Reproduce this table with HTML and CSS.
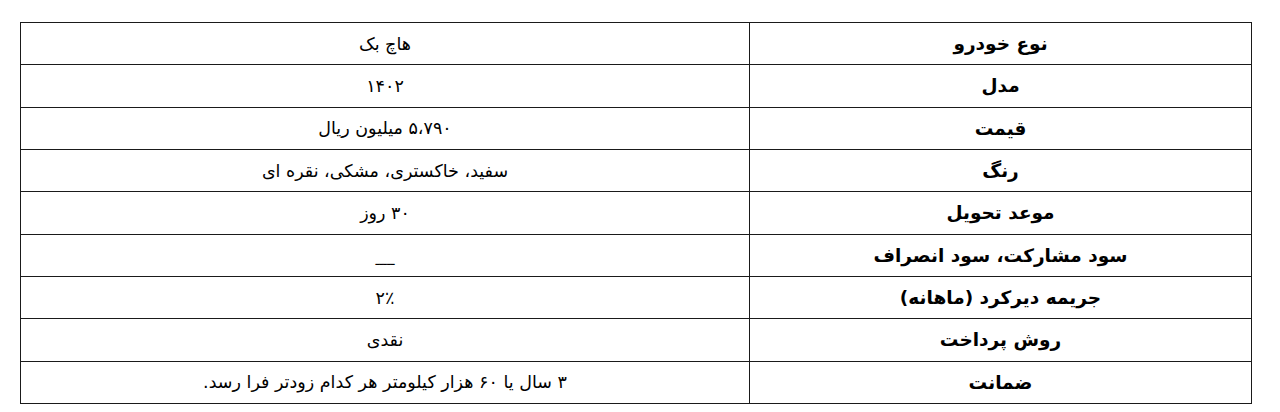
FILE: index.html
```html
<!DOCTYPE html>
<html lang="fa" dir="rtl">
<head>
<meta charset="utf-8">
<title>مشخصات خودرو</title>
<link rel="stylesheet" href="styles.css">
</head>
<body>
<table class="spec">
  <tbody>
    <tr><th>نوع خودرو</th><td>هاچ بک</td></tr>
    <tr><th>مدل</th><td>۱۴۰۲</td></tr>
    <tr><th>قیمت</th><td>۵،۷۹۰ میلیون ریال</td></tr>
    <tr><th>رنگ</th><td>سفید، خاکستری، مشکی، نقره ای</td></tr>
    <tr><th>موعد تحویل</th><td>۳۰ روز</td></tr>
    <tr><th>سود مشارکت، سود انصراف</th><td><span class="dash">ـــــ</span></td></tr>
    <tr><th>جریمه دیرکرد (ماهانه)</th><td>۲٪</td></tr>
    <tr><th>روش پرداخت</th><td>نقدی</td></tr>
    <tr><th>ضمانت</th><td>۳ سال یا ۶۰ هزار کیلومتر هر کدام زودتر فرا رسد.</td></tr>
  </tbody>
</table>
</body>
</html>
```
FILE: styles.css
```css
html, body {
  margin: 0;
  padding: 0;
  background: #ffffff;
}
body {
  padding: 22px 28px 0 20px;
  font-family: "DejaVu Sans", sans-serif;
  color: #000;
}
.spec {
  width: 1232px;
  border-collapse: collapse;
  table-layout: fixed;
  border: 1.5px solid #1a1a1a;
}
.spec th,
.spec td {
  border: 1.5px solid #1a1a1a;
  height: 41.33px;
  padding: 0;
  text-align: center;
  vertical-align: middle;
}
.spec th {
  width: 501px;
  font-size: 18.5px;
  font-weight: bold;
}
.spec td {
  font-size: 17.5px;
  font-weight: normal;
}
.dash {
  display: inline-block;
  position: relative;
  top: 4px;
  font-size: 13px;
}
```
